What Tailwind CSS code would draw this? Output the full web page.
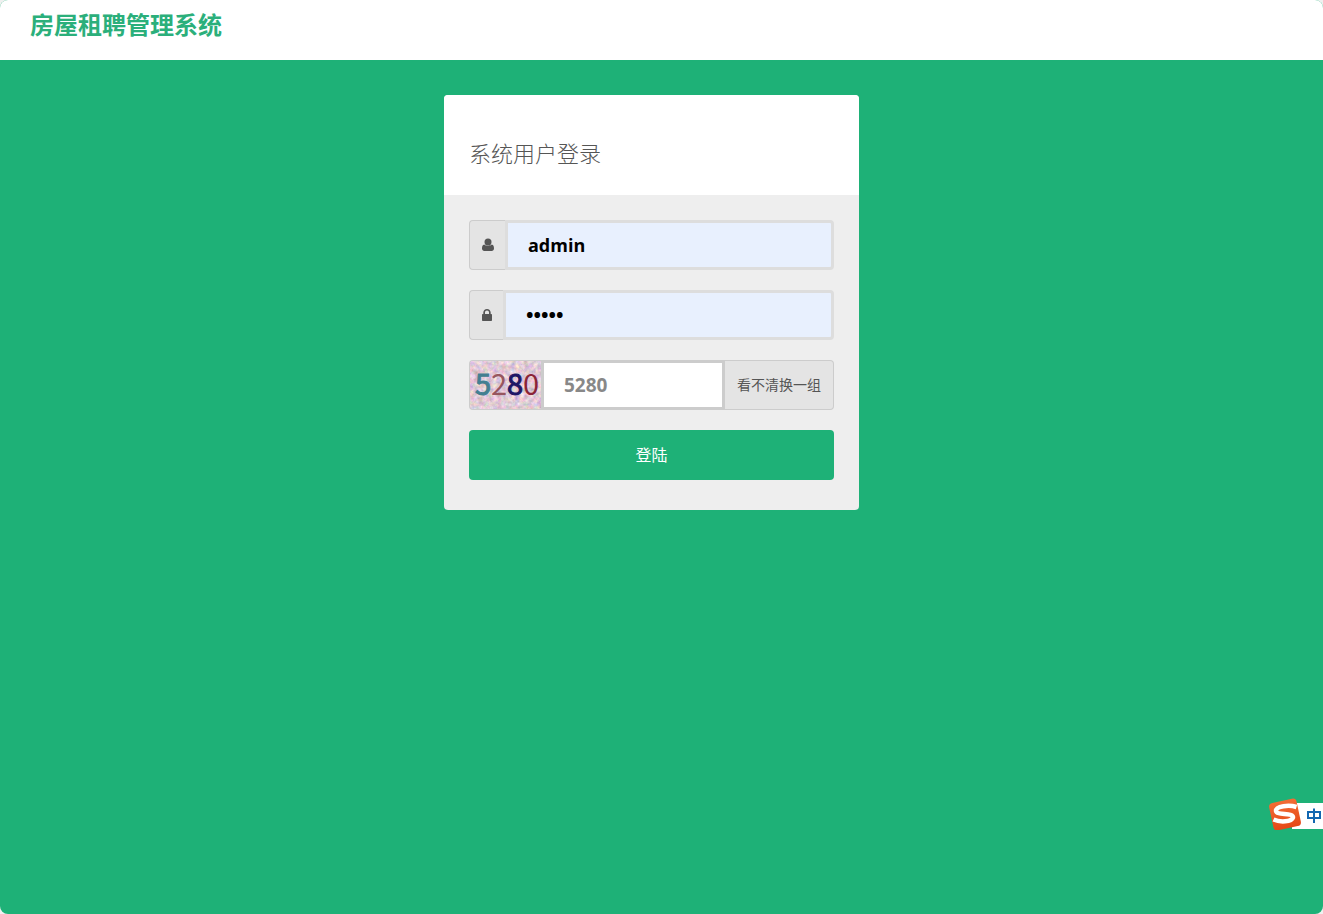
<!DOCTYPE html>
<html lang="zh-CN">
<head>
  <meta charset="UTF-8" />
  <meta name="viewport" content="width=device-width, initial-scale=1.0" />
  <title>房屋租聘管理系统</title>
  <script src="https://cdn.jsdelivr.net/npm/@tailwindcss/browser@4"></script>
</head>
<body class="bg-[#f0f0f0] font-['Open_Sans','Noto_Sans_CJK_SC',sans-serif] text-[#555]">
  <div class="min-h-screen flex flex-col bg-[#1eb177] rounded-lg overflow-hidden">
    <header class="h-[60px] bg-white px-[30px] pt-[9px]">
      <h1 class="text-2xl leading-8 font-bold text-[#2baf7b]">房屋租聘管理系统</h1>
    </header>

    <!-- Login card -->
    <main class="flex justify-center pt-[35px] pr-5">
      <section class="w-full max-w-[415px] rounded bg-[#eee] overflow-hidden">
        <div class="h-[100px] bg-white px-[25px] pt-[42px]">
          <h2 class="text-[22px] leading-8 font-light text-[#555]">系统用户登录</h2>
        </div>
        <form class="flex flex-col gap-5 px-[25px] pt-[25px] pb-[30px]" onsubmit="return false">
          <div class="flex h-[50px]">
            <label for="username" class="w-9 flex items-center justify-center rounded-l border border-r-0 border-[#ccc] bg-[#e4e4e4]" aria-label="用户名">
              <svg class="w-3 h-3.5" viewBox="0 0 12 14" fill="#555"><circle cx="6" cy="4" r="3.5" /><path d="M2.2 6.600C.6 7 0 8.500 0 10.600C0 12.200 1 13 2.300 13H9.700C11 13 12 12.200 12 10.600C12 8.500 11.400 7 9.800 6.600C8.200 8.200 3.800 8.200 2.200 6.600Z" /></svg>
            </label>
            <input id="username" type="text" value="admin" class="flex-1 min-w-0 rounded-r border-3 border-[#ddd] bg-[#e8f0fe] px-5 text-lg font-bold text-black outline-none" />
          </div>
          <div class="flex h-[50px]">
            <label for="password" class="w-[34px] flex items-center justify-center rounded-l border border-r-0 border-[#ccc] bg-[#e4e4e4]" aria-label="密码">
              <svg class="w-2.5 h-3.5" viewBox="0 0 10 14" fill="#555"><path fill-rule="evenodd" d="M1.300 6V4.600C1.300 2.500 2.900 1 5 1S8.700 2.500 8.700 4.600V6H9.200Q10 6 10 6.800V12.200Q10 13 9.200 13H.8Q0 13 0 12.200V6.800Q0 6 .8 6ZM3 6H7V4.600C7 3.400 6.200 2.600 5 2.600S3 3.400 3 4.600Z" /></svg>
            </label>
            <input id="password" type="password" value="admin" class="flex-1 min-w-0 rounded-r border-3 border-[#ddd] bg-[#e8f0fe] px-5 text-xl font-bold text-black outline-none" />
          </div>
          <div class="flex h-[50px]">
            <div class="w-[72px] rounded-l border border-r-0 border-[#ccc] overflow-hidden">
              <svg class="w-full h-full" viewBox="0 0 71 48" role="img" aria-label="验证码">
                <filter id="noise" x="0" y="0" width="100%" height="100%" color-interpolation-filters="sRGB">
                  <feTurbulence type="fractalNoise" baseFrequency="0.22" numOctaves="3" seed="7" />
                  <feColorMatrix values="0.4 0.1 0 0 0.63  0.15 0.35 0 0 0.54  0.1 0.1 0.3 0 0.59  0 0 0 0 1" />
                </filter>
                <rect width="71" height="48" fill="#decbd2" />
                <rect width="71" height="48" filter="url(#noise)" />
                <g font-family="Noto Sans CJK SC, sans-serif" font-size="29">
                  <text x="5" y="34" fill="#437f91" stroke="#437f91">5</text>
                  <text x="21" y="34" fill="#97565f">2</text>
                  <text x="37" y="34" fill="#201565" stroke="#201565">8</text>
                  <text x="53" y="34" fill="#8b2437">0</text>
                </g>
              </svg>
            </div>
            <input id="code" type="text" value="5280" aria-label="验证码" class="flex-1 min-w-0 border-3 border-[#ccc] bg-white px-5 text-[19px] font-bold text-[#888] outline-none" />
            <button type="button" class="w-[109px] rounded-r border border-l-0 border-[#ccc] bg-[#e4e4e4] text-sm text-[#555]">看不清换一组</button>
          </div>
          <button type="submit" class="h-[50px] rounded bg-[#1eb177] text-base text-white">登陆</button>
        </form>
      </section>
    </main>
  </div>

  <!-- Input method bar -->
  <div class="fixed right-0 top-[798px] flex items-center">
    <svg class="w-[55px] h-8" viewBox="0 0 55 32">
      <defs>
        <linearGradient id="orange" x1="0" y1="0" x2="0" y2="1">
          <stop offset="0" stop-color="#f26d35" />
          <stop offset="1" stop-color="#e64816" />
        </linearGradient>
      </defs>
      <rect x="24" y="5" width="31" height="26" fill="#fff" />
      <rect x="3" y="2.500" width="28" height="28" rx="4" fill="url(#orange)" transform="rotate(-12 17 16.500)" />
      <path d="M28.500 9C21 6.500 8 8 8 13C8.500 17.500 25.500 14.500 25 19.500C23.500 24 12 24.500 5.500 21.500" fill="none" stroke="#fff" stroke-width="4.500" />
      <path d="M40 14H52V20H40ZM46 10.500V25" fill="none" stroke="#1267b1" stroke-width="2" />
    </svg>
  </div>
</body>
</html>
